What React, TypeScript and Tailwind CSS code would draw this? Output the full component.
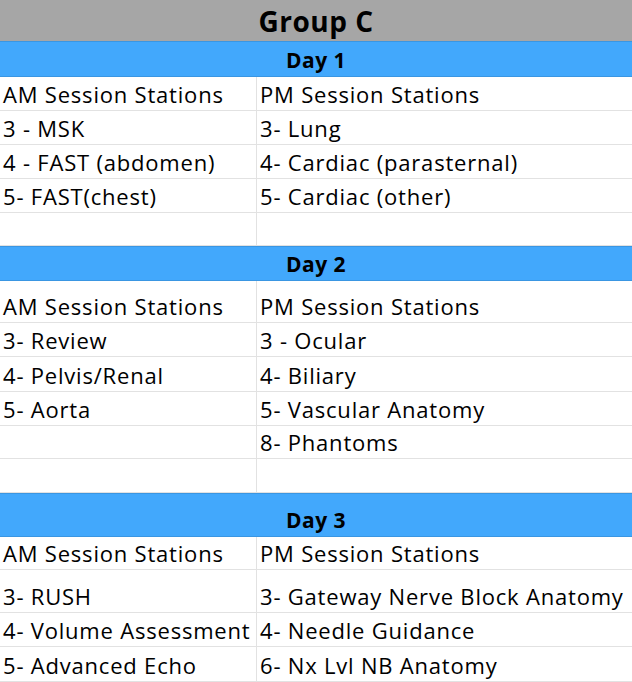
const font = { fontFamily: '"Open Sans", Lato, sans-serif' };

type Row = { h: string; am: string; pm: string };

const days: { label: string; band: string; rows: Row[] }[] = [
  {
    label: 'Day 1',
    band: 'h-[36px]',
    rows: [
      { h: 'h-[34px]', am: 'AM Session Stations', pm: 'PM Session Stations' },
      { h: 'h-[34px]', am: '3 - MSK', pm: '3- Lung' },
      { h: 'h-[34px]', am: '4 - FAST (abdomen)', pm: '4- Cardiac (parasternal)' },
      { h: 'h-[34px]', am: '5- FAST(chest)', pm: '5- Cardiac (other)' },
      { h: 'h-[33px]', am: '', pm: '' },
    ],
  },
  {
    label: 'Day 2',
    band: 'h-[35px]',
    rows: [
      { h: 'h-[42px]', am: 'AM Session Stations', pm: 'PM Session Stations' },
      { h: 'h-[34px]', am: '3- Review', pm: '3 - Ocular' },
      { h: 'h-[35px]', am: '4- Pelvis/Renal', pm: '4- Biliary' },
      { h: 'h-[34px]', am: '5- Aorta', pm: '5- Vascular Anatomy' },
      { h: 'h-[33px]', am: '', pm: '8- Phantoms' },
      { h: 'h-[34px]', am: '', pm: '' },
    ],
  },
  {
    label: 'Day 3',
    band: 'h-[44px]',
    rows: [
      { h: 'h-[33px]', am: 'AM Session Stations', pm: 'PM Session Stations' },
      { h: 'h-[43px]', am: '3- RUSH', pm: '3- Gateway Nerve Block Anatomy' },
      { h: 'h-[34px]', am: '4- Volume Assessment', pm: '4- Needle Guidance' },
      { h: 'h-[35px]', am: '5- Advanced Echo', pm: '6- Nx Lvl NB Anatomy' },
    ],
  },
];

function Cell({ text, h, last }: { text: string; h: string; last?: boolean }) {
  return (
    <div
      className={`${h} flex items-end overflow-visible whitespace-nowrap border-b border-[#e2e2e2] pl-[3px] pb-[3px] text-[22px] leading-[26px] tracking-[0.8px] text-black ${
        last ? '' : 'border-r'
      }`}
    >
      {text}
    </div>
  );
}

export default function App() {
  return (
    <div className="w-[632px] h-[682px] overflow-hidden bg-white" style={font}>
      <div className="h-[41px] flex items-center justify-center bg-[#a6a6a6] text-[28px] tracking-[0.5px] font-bold text-black">
        Group C
      </div>
      {days.map((d) => (
        <div key={d.label}>
          <div
            className={`${d.band} flex items-end justify-center border-y border-[#3a96e2] bg-[#42a8fc] pb-[3px] text-[21px] leading-[26px] tracking-[0.5px] font-bold text-black`}
          >
            {d.label}
          </div>
          <div className="grid grid-cols-[257px_1fr]">
            {d.rows.map((r, i) => (
              <div key={i} className="contents">
                <Cell text={r.am} h={r.h} />
                <Cell text={r.pm} h={r.h} last />
              </div>
            ))}
          </div>
        </div>
      ))}
    </div>
  );
}
